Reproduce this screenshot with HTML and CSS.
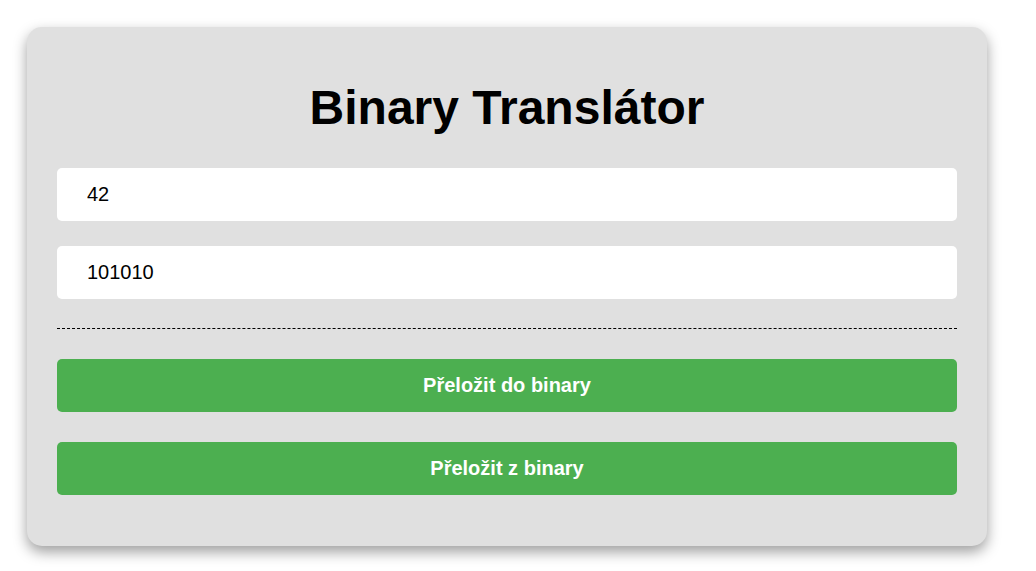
FILE: index.html
```
<!DOCTYPE html>
<html lang="cs">
<head>
<meta charset="utf-8">
<title>Binary Translátor</title>
<link rel="stylesheet" href="styles.css">
</head>
<body>
<div class="card">
  <h1 class="title">Binary Translátor</h1>
  <input class="field field-first" type="text" value="42">
  <input class="field" type="text" value="101010">
  <div class="divider"></div>
  <button class="btn btn-first" type="button">Přeložit do binary</button>
  <button class="btn" type="button">Přeložit z binary</button>
</div>
</body>
</html>
```
FILE: styles.css
```
html, body {
  margin: 0;
  padding: 0;
  background: #ffffff;
}

body {
  padding: 27px;
  font-family: "Liberation Sans", Arial, sans-serif;
}

.card {
  box-sizing: border-box;
  width: 960px;
  height: 519px;
  padding: 21px 30px 0;
  background: #e0e0e0;
  border-radius: 15px;
  box-shadow: 0 6px 14px rgba(0, 0, 0, 0.38);
  display: flex;
  flex-direction: column;
}

.title {
  margin: 32px 0 33px;
  font-size: 48px;
  font-weight: bold;
  line-height: normal;
  text-align: center;
  color: #000;
}

.field {
  box-sizing: border-box;
  width: 100%;
  height: 53px;
  margin: 0;
  padding: 15px 30px;
  border: none;
  border-radius: 5px;
  background: #fff;
  font-family: "Liberation Sans", Arial, sans-serif;
  font-size: 20px;
  color: #000;
  outline: none;
}

.field-first {
  margin-bottom: 25px;
}

.divider {
  margin: 29px 0 30px;
  border-top: 1px dashed #000;
}

.btn {
  box-sizing: border-box;
  width: 100%;
  height: 53px;
  margin: 0;
  padding: 0;
  border: none;
  border-radius: 5px;
  background: #4caf50;
  color: #fff;
  font-family: "Liberation Sans", Arial, sans-serif;
  font-size: 20px;
  font-weight: bold;
}

.btn-first {
  margin-bottom: 30px;
}
```
